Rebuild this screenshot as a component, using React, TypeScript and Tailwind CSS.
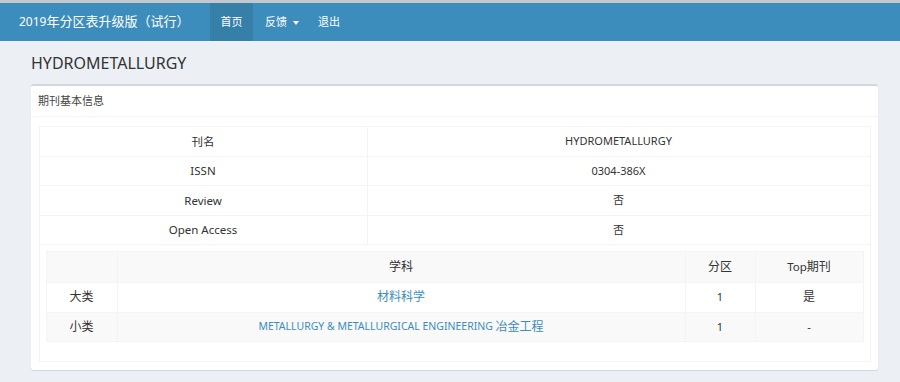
import React from "react";

const font = { fontFamily: '"Noto Sans", "Noto Sans CJK SC", sans-serif' };

function Cell({ children, className = "" }: { children: React.ReactNode; className?: string }) {
  return <div className={`flex items-center justify-center ${className}`}>{children}</div>;
}

export default function App() {
  const info = [
    ["刊名", "HYDROMETALLURGY"],
    ["ISSN", "0304-386X"],
    ["Review", "否"],
    ["Open Access", "否"],
  ];
  return (
    <div className="w-[900px] h-[382px] bg-[#ecf0f5] overflow-hidden text-[#333]" style={font}>
      {/* navbar */}
      <div className="border-t-[3px] border-[#c3c8cd] bg-[#3c8dbc] h-[41px] flex items-stretch text-white">
        <div className="pl-[19px] w-[210px] flex items-center text-[13px]">
          <span className="text-[12px]">2019</span>年分区表升级版（试行）
        </div>
        <div className="bg-[#367fa9] w-[43px] justify-center flex items-center text-[11px]">首页</div>
        <div className="pl-[12px] pr-[10px] w-[65px] flex items-center text-[11px]">
          反馈
          <span className="ml-[6px] mt-[1px] w-0 h-0 border-l-[3.5px] border-r-[3.5px] border-t-[4px] border-l-transparent border-r-transparent border-t-white" />
        </div>
        <div className="pl-[0px] flex items-center text-[11px]">退出</div>
      </div>

      {/* content */}
      <div className="pl-[31px] pr-[22px]">
        <div className="h-[43px] flex items-center pt-[1px] text-[16px] text-[#333]">HYDROMETALLURGY</div>

        <div className="bg-white border-t-[2px] border-[#d2d6de] rounded-[3px] shadow-[0_1px_1px_rgba(0,0,0,0.1)]">
          <div className="h-[31px] flex items-center pl-[7px] text-[11px] text-[#444] border-b border-[#f4f4f4]">
            期刊基本信息
          </div>
          <div className="pt-[9px] px-[7.5px] pb-[8px]">
            <div className="border border-[#f4f4f4]">
              {info.map(([k, v]) => (
                <div key={k} className="flex h-[29.5px] border-b border-[#f4f4f4]">
                  <Cell className="w-[328px] border-r border-[#f4f4f4] text-[11.5px]">{k}</Cell>
                  <Cell className="flex-1 text-[11px]">{v}</Cell>
                </div>
              ))}
              <div className="pt-[6px] px-[6px] pb-[19px]">
                <div className="border border-[#f4f4f4] text-[12px]">
                  <div className="flex h-[30px] bg-[#f9f9f9]">
                    <Cell className="w-[71px] border-r border-[#f4f4f4]">{""}</Cell>
                    <Cell className="flex-1 border-r border-[#f4f4f4]">学科</Cell>
                    <Cell className="w-[70px] border-r border-[#f4f4f4]">分区</Cell>
                    <Cell className="w-[107px]"><span className="text-[11.5px]">Top</span>期刊</Cell>
                  </div>
                  <div className="flex h-[29.5px] bg-white border-t border-[#f4f4f4]">
                    <Cell className="w-[71px] border-r border-[#f4f4f4]">大类</Cell>
                    <Cell className="flex-1 border-r border-[#f4f4f4] text-[#3c8dbc]">材料科学</Cell>
                    <Cell className="w-[70px] border-r border-[#f4f4f4] text-[11px]">1</Cell>
                    <Cell className="w-[107px]">是</Cell>
                  </div>
                  <div className="flex h-[29.5px] bg-[#f9f9f9] border-t border-[#f4f4f4]">
                    <Cell className="w-[71px] border-r border-[#f4f4f4]">小类</Cell>
                    <Cell className="flex-1 border-r border-[#f4f4f4] text-[#3c8dbc] text-[10.5px]">
                      METALLURGY &amp; METALLURGICAL ENGINEERING&nbsp;<span className="text-[12px]">冶金工程</span>
                    </Cell>
                    <Cell className="w-[70px] border-r border-[#f4f4f4] text-[11px]">1</Cell>
                    <Cell className="w-[107px] text-[11px]">-</Cell>
                  </div>
                </div>
              </div>
            </div>
          </div>
        </div>
      </div>
    </div>
  );
}
